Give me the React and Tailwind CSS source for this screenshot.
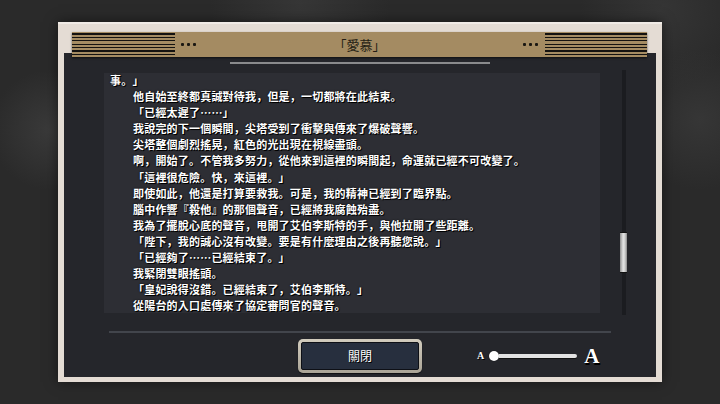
import React from "react";

const lines = [
  "事。」",
  "他自始至終都真誠對待我，但是，一切都將在此結束。",
  "「已經太遲了……」",
  "我說完的下一個瞬間，尖塔受到了衝擊與傳來了爆破聲響。",
  "尖塔整個劇烈搖晃，紅色的光出現在視線盡頭。",
  "啊，開始了。不管我多努力，從他來到這裡的瞬間起，命運就已經不可改變了。",
  "「這裡很危險。快，來這裡。」",
  "即使如此，他還是打算要救我。可是，我的精神已經到了臨界點。",
  "腦中作響『殺他』的那個聲音，已經將我腐蝕殆盡。",
  "我為了擺脫心底的聲音，甩開了艾伯李斯特的手，與他拉開了些距離。",
  "「陛下，我的誠心沒有改變。要是有什麼理由之後再聽您說。」",
  "「已經夠了……已經結束了。」",
  "我緊閉雙眼搖頭。",
  "「皇妃說得沒錯。已經結束了，艾伯李斯特。」",
  "從陽台的入口處傳來了協定審問官的聲音。",
];

const cjk = { fontFamily: '"Noto Sans CJK JP", "Noto Sans CJK TC", sans-serif' };
const serif = { fontFamily: '"Liberation Serif", "DejaVu Serif", serif' };

function Stripes({ className }) {
  return (
    <div
      className={`h-full bg-[repeating-linear-gradient(180deg,#a48b62_0px,#a48b62_1.4px,#141210_1.4px,#141210_2.7px,#a48b62_2.7px,#a48b62_3.37px)] ${className}`}
    />
  );
}

function Dots() {
  return (
    <div className="flex gap-[3px] items-center">
      <span className="w-[3px] h-[3px] rounded-[1px] bg-[#1a1712]" />
      <span className="w-[3px] h-[3px] rounded-[1px] bg-[#1a1712]" />
      <span className="w-[3px] h-[3px] rounded-[1px] bg-[#1a1712]" />
    </div>
  );
}

export default function App() {
  return (
    <div className="w-[720px] h-[404px] overflow-hidden bg-[#2a2a2a] bg-[radial-gradient(circle_at_50px_130px,#3a3a3a_0px,transparent_60px),radial-gradient(circle_at_300px_5px,#363636_0px,transparent_90px),radial-gradient(circle_at_700px_120px,#363636_0px,transparent_70px),radial-gradient(circle_at_660px_10px,#353535_0px,transparent_80px)] pt-[22px] pl-[58px]">
      <div className="w-[604px] h-[360px] bg-[#e4dcd4] border-t-2 border-[#f0ebe6] flex flex-col shadow-[0_0_12px_rgba(0,0,0,0.5)]">
        {/* header */}
        <div className="relative z-10 mt-[8px] ml-[14px] mr-[15px] h-[25px] bg-[#a48b62] flex items-center shadow-[0_1px_2px_rgba(0,0,0,0.6)]">
          <Stripes className="w-[103px] pt-[1px]" />
          <div className="ml-[6px]">
            <Dots />
          </div>
          <div
            className="flex-1 text-center text-[13px] leading-none text-[#241e14] [text-spacing-trim:space-all]"
            style={cjk}
          >
            「愛慕」
          </div>
          <div className="mr-[7px]">
            <Dots />
          </div>
          <Stripes className="w-[102px] pt-[1px]" />
        </div>
        {/* dark panel */}
        <div className="-mt-[4px] mx-[6px] h-[324px] bg-[#25262b] flex flex-col">
          <div className="mt-[9px] mx-auto w-[260px] h-[2px] bg-[#8a8b8d]" />
          <div className="mt-[9px] flex items-stretch">
            <div className="ml-[40px] w-[496px] h-[240px] bg-[#2d2e34] overflow-hidden pl-[6px]">
              <div
                className="-mt-[1px] text-white text-[11px] font-bold leading-[16.1px] tracking-[0.2px] [text-spacing-trim:space-all] [text-shadow:1px_1px_0_#000,0_0_2px_#000]"
                style={cjk}
              >
                {lines.map((l, i) => (
                  <div key={i} className={i === 0 ? "whitespace-nowrap" : "pl-[23px] whitespace-nowrap"}>
                    {l}
                  </div>
                ))}
              </div>
            </div>
            <div className="ml-[20px] w-[7px] -mt-[3px] h-[245px] flex flex-col items-center">
              <div className="w-[4px] h-[162px] bg-[#1b1c20]" />
              <div className="w-[7px] h-[41px] border-y border-[#111] bg-[linear-gradient(90deg,#8e8e8e,#e4e4e4_45%,#d0d0d0_70%,#8a8a8a)]" />
              <div className="w-[4px] flex-1 bg-[#1b1c20]" />
            </div>
          </div>
          <div className="mt-[16px] ml-[45px] w-[502px] h-[2px] bg-[#42454c]" />
          <div className="mt-[6px] flex items-center">
            <div className="ml-[234px] w-[124px] h-[34px] rounded-[5px] bg-[linear-gradient(180deg,#d2ccbe,#aaa496)] p-[3px] shadow-[0_1px_1px_rgba(0,0,0,0.6)]">
              <div
                className="w-full h-full rounded-[2px] bg-[#272f3e] border border-[#0e1016] flex items-center justify-center text-[12px] text-white [text-shadow:1px_1px_0_#000]"
                style={cjk}
              >
                關閉
              </div>
            </div>
            <div className="ml-[55px] flex items-center">
              <span
                className="text-[10px] font-bold text-white leading-none [text-shadow:1px_1px_0_#000]"
                style={serif}
              >
                A
              </span>
              <div className="ml-[5px] w-[10px] h-[10px] rounded-full bg-white shadow-[0_0_1px_#000]" />
              <div className="w-[78px] h-[4px] bg-[#e2e2e2] rounded-r-[2px] shadow-[0_1px_0_#111]" />
              <span
                className="ml-[7px] text-[21px] font-bold text-white leading-none [text-shadow:1px_1px_0_#000,1px_2px_0_#000]"
                style={serif}
              >
                A
              </span>
            </div>
          </div>
        </div>
      </div>
    </div>
  );
}
